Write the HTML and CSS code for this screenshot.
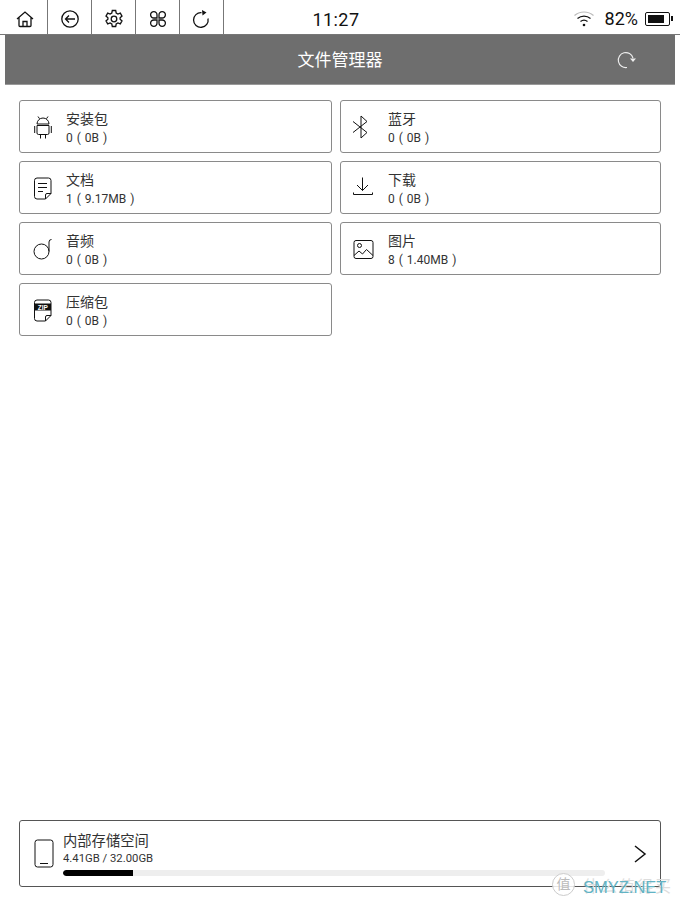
FILE: index.html
```html
<!DOCTYPE html>
<html lang="zh-CN">
<head>
	<meta charset="UTF-8">
	<title>文件管理器</title>
	<link rel="stylesheet" href="styles.css">
</head>
<body>
<div class="page">
	<div class="statusbar">
		<div class="navbtns">
			<div class="navbtn first">
				<svg width="20" height="20" viewBox="0 0 20 20"><path d="M2 10 10 3 18 10M4 8.500V16.500a1 1 0 0 0 1 1h10a1 1 0 0 0 1-1V8.500M8 17.500V12.500h4v5" /></svg>
			</div>
			<div class="navbtn">
				<svg width="20" height="20" viewBox="0 0 20 20"><circle cx="10" cy="10" r="8.200" /><path d="M15 10H5.500M9 6.500 5.500 10 9 13.500" /></svg>
			</div>
			<div class="navbtn">
				<svg width="20" height="20" viewBox="0 0 20 20"><circle cx="10" cy="10" r="2.800" /><path d="M8.300 1.500h3.400l.5 2.500 1.700 1 2.400-.9 1.700 3-1.900 1.600v1.600l1.900 1.600-1.700 3-2.400-.9-1.700 1-.5 2.500H8.300l-.5-2.500-1.700-1-2.400.9-1.700-3 1.900-1.600V8.700L2 7.100l1.700-3 2.400.9 1.700-1z" /></svg>
			</div>
			<div class="navbtn">
				<svg width="20" height="20" viewBox="0 0 20 20"><path d="M9 9H6a3.200 3.200 0 1 1 3-3zM11 9h3a3.200 3.200 0 1 0-3-3zM9 11H6a3.200 3.200 0 1 0 3 3zM11 11h3a3.200 3.200 0 1 1-3 3z" /></svg>
			</div>
			<div class="navbtn">
				<svg width="20" height="20" viewBox="0 0 20 20"><path d="M16 9.500A7.300 7.300 0 1 1 9.500 3.700" /><path class="solid" d="M10 1 14.500 3.500 10.500 6.500z" /></svg>
			</div>
		</div>
		<div class="clock">11:27</div>
		<div class="status-right">
			<svg class="wifi" width="22" height="18" viewBox="0 0 22 18"><path class="faint" d="M1.500 5.500C7 .8 15 .8 20.500 5.500" /><path d="M4.500 8.500C8.200 5.300 13.800 5.300 17.500 8.500M7.500 11.500C9.600 9.800 12.400 9.800 14.500 11.500" /><circle class="solid" cx="11" cy="15" r="1.300" /></svg>
			<span class="battery-text">82%</span>
			<div class="battery"><div class="battery-fill"></div></div>
		</div>
	</div>

	<div class="titlebar">
		<span class="title">文件管理器</span>
		<svg class="refresh" width="20" height="20" viewBox="0 0 20 20"><path d="M10 17.500A7.500 7.500 0 1 1 16 8" /><path class="white-fill" d="M13 8.500H19L16 12z" /></svg>
	</div>

	<div class="cats">
		<div class="card">
			<svg class="icon" width="24" height="26" viewBox="0 0 24 26"><path d="M6 10a6 6 0 0 1 12 0zM8.500 4.700 7 2.500M15.500 4.700 17 2.500M6 11.500H18V19a1.500 1.500 0 0 1-1.500 1.500h-9A1.500 1.500 0 0 1 6 19zM3.700 12v7M20.300 12v7M9.500 20.500V24.500M14.500 20.500V24.500" /></svg>
			<div class="info"><div class="name">安装包</div><div class="count">0 ( 0B )</div></div>
		</div>
		<div class="card">
			<svg class="icon" width="24" height="26" viewBox="0 0 24 26"><path d="M1 7.500 15 18.500 9 24V2L15 7.500 1 18.500" /></svg>
			<div class="info"><div class="name">蓝牙</div><div class="count">0 ( 0B )</div></div>
		</div>
		<div class="card">
			<svg class="icon" width="24" height="26" viewBox="0 0 24 26"><path d="M14.500 24H6a2.500 2.500 0 0 1-2.500-2.500V5.500A2.500 2.500 0 0 1 6 3h11.500A2.500 2.500 0 0 1 20 5.500V18.500zM14.500 24V20a1.500 1.500 0 0 1 1.500-1.500h4M7 8.500H16M7 12.500H16M7 16.500H12" /></svg>
			<div class="info"><div class="name">文档</div><div class="count">1 ( 9.17MB )</div></div>
		</div>
		<div class="card">
			<svg class="icon" width="24" height="26" viewBox="0 0 24 26"><path d="M10.500 2.500V15.500M5 10 10.500 15.500 16 10M1.500 17.500V19.500H20.500V17.500" /></svg>
			<div class="info"><div class="name">下载</div><div class="count">0 ( 0B )</div></div>
		</div>
		<div class="card">
			<svg class="icon" width="24" height="26" viewBox="0 0 24 26"><circle cx="10.500" cy="15.500" r="7.500" /><path d="M18 15.500V6a2.500 2.500 0 0 1 2.500-2.500" /></svg>
			<div class="info"><div class="name">音频</div><div class="count">0 ( 0B )</div></div>
		</div>
		<div class="card">
			<svg class="icon" width="24" height="26" viewBox="0 0 24 26"><rect x="2" y="4.500" width="19" height="18" rx="2" /><circle cx="7.500" cy="9.500" r="2" /><path d="M2 19.500 7 15 10.500 18 14.500 13.500 21 19.500" /></svg>
			<div class="info"><div class="name">图片</div><div class="count">8 ( 1.40MB )</div></div>
		</div>
		<div class="card">
			<svg class="icon" width="24" height="26" viewBox="0 0 24 26"><path d="M14.500 24H6a2.500 2.500 0 0 1-2.500-2.500V5.500A2.500 2.500 0 0 1 6 3h11.500A2.500 2.500 0 0 1 20 5.500V18.500zM14.500 24V20a1.500 1.500 0 0 1 1.500-1.500h4" /><rect class="solid" x="3.500" y="6.500" width="16.500" height="7" /><text class="zip" x="11.800" y="12.500">ZIP</text></svg>
			<div class="info"><div class="name">压缩包</div><div class="count">0 ( 0B )</div></div>
		</div>
	</div>

	<div class="storage">
		<svg class="phone" width="20" height="30" viewBox="0 0 20 30"><rect x="1" y="1" width="18" height="27" rx="2.500" /><path d="M6 24.500H14" /></svg>
		<div class="storage-info">
			<div class="storage-name">内部存储空间</div>
			<div class="storage-size">4.41GB / 32.00GB</div>
			<div class="bar"><div class="bar-used" style="width:13%"></div></div>
		</div>
		<svg class="chevron" width="14" height="18" viewBox="0 0 14 18"><path d="M2 1 12 9 2 17" /></svg>
	</div>

	<div class="watermark">
		<span class="wm-badge">值</span>
		<span class="wm-faint">什么值得买</span>
		<span class="wm-text">SMYZ.NET</span>
	</div>
</div>
</body>
</html>
```

FILE: styles.css
```css
*{
	box-sizing: border-box;
}
html, body{
	margin: 0;
	padding: 0;
	background: #fff;
}
body{
	font-family: "Roboto", "Noto Sans CJK SC", sans-serif;
	color: #222;
}
svg{
	fill: none;
	stroke: #111;
	stroke-width: 1.300;
	flex: none;
}
svg .solid{
	fill: #111;
	stroke: none;
}
.page{
	position: relative;
	width: 680px;
	height: 907px;
	overflow: hidden;
	display: flex;
	flex-direction: column;
}

.statusbar{
	height: 35px;
	flex: none;
	display: flex;
	align-items: stretch;
	border-bottom: 1px solid #777;
}
.navbtns{
	display: flex;
	width: 224px;
	flex: none;
}
.navbtn{
	width: 44px;
	display: flex;
	align-items: center;
	justify-content: center;
	padding-top: 4px;
	border-right: 1px solid #777;
}
.navbtn.first{
	width: 48px;
	padding-left: 3px;
}
.clock{
	width: 224px;
	flex: none;
	text-align: center;
	font-size: 18px;
	letter-spacing: .4px;
	line-height: 39px;
	color: #111;
}
.status-right{
	margin-left: auto;
	display: flex;
	align-items: center;
	padding: 3px 10px 0 0;
}
.wifi{
	margin-right: 10px;
	stroke-width: 1.200;
}
.wifi .faint{
	stroke: #bbb;
}
.battery-text{
	font-size: 18px;
	color: #111;
	margin-right: 7px;
}
.battery{
	position: relative;
	width: 25px;
	height: 14px;
	border: 1.500px solid #111;
	border-radius: 2px;
	padding: 2px;
}
.battery::after{
	content: "";
	position: absolute;
	right: -4px;
	top: 3px;
	width: 2px;
	height: 5px;
	background: #111;
}
.battery-fill{
	width: 82%;
	height: 100%;
	background: #111;
}

.titlebar{
	position: relative;
	height: 50px;
	flex: none;
	margin: 0 5px;
	padding-bottom: 2px;
	background: #6e6e6e;
	display: flex;
	align-items: center;
	justify-content: center;
	border-bottom: 1px solid #999;
}
.title{
	font-size: 17px;
	color: #fff;
}
.refresh{
	position: absolute;
	left: 612px;
	top: 15px;
	stroke: #eee;
	stroke-width: 1.100;
}
.refresh .white-fill{
	fill: #eee;
	stroke: none;
}

.cats{
	display: grid;
	grid-template-columns: 313px 321px;
	grid-auto-rows: 53px;
	gap: 8px;
	padding: 15px 0 0 19px;
}
.card{
	display: flex;
	align-items: center;
	padding-left: 11px;
	border: 1px solid #8a8a8a;
	border-radius: 3px;
}
.icon{
	margin-right: 11px;
	stroke-width: 1;
}
.card:nth-child(even) .icon{
	margin-right: 12px;
}
.zip{
	font-family: "Liberation Sans", sans-serif;
	font-size: 6.500px;
	font-weight: 700;
	text-anchor: middle;
	fill: #fff;
	stroke: none;
}
.info{
	padding-top: 2px;
}
.name{
	font-size: 14px;
	line-height: 20px;
	color: #333;
}
.count{
	font-size: 12px;
	line-height: 18px;
	word-spacing: 1px;
	color: #333;
}

.storage{
	display: flex;
	align-items: center;
	height: 67px;
	margin: auto 19px 20px;
	padding: 0 13px 0 14px;
	border: 1px solid #555;
	border-radius: 3px;
}
.phone{
	margin-right: 9px;
	stroke-width: 1;
}
.storage-info{
	flex: 1;
}
.storage-name{
	font-size: 14.300px;
	line-height: 20px;
	color: #333;
}
.storage-size{
	font-size: 11.300px;
	line-height: 16px;
	color: #333;
}
.bar{
	width: 542px;
	height: 6px;
	margin-top: 3px;
	background: #eee;
	border-radius: 3px;
	overflow: hidden;
}
.bar-used{
	height: 100%;
	background: #000;
	border-radius: 3px 0 0 3px;
}
.chevron{
	stroke-width: 1.500;
	margin-left: 8px;
}

.watermark{
	position: absolute;
	left: 552px;
	top: 873px;
	width: 128px;
	height: 23px;
	display: flex;
	align-items: center;
}
.wm-badge{
	width: 23px;
	height: 23px;
	flex: none;
	border-radius: 50%;
	border: 1px solid #ccc;
	background: rgba(255, 255, 255, .85);
	color: #bbb;
	font-size: 14px;
	line-height: 20px;
	text-align: center;
}
.wm-faint{
	margin-left: 8px;
	font-size: 16px;
	letter-spacing: 2px;
	white-space: nowrap;
	color: #ddd;
}
.wm-text{
	position: absolute;
	left: 31px;
	top: 5px;
	font-family: "Liberation Sans", sans-serif;
	font-size: 16.500px;
	color: #62b3c4;
	white-space: nowrap;
}
```
